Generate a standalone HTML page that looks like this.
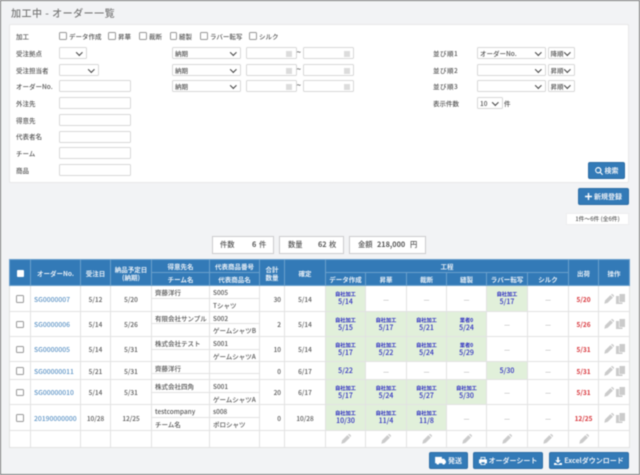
<!DOCTYPE html>
<html lang="ja"><head><meta charset="utf-8"><title>加工中 - オーダー一覧</title>
<style>
*{box-sizing:border-box}
html,body{margin:0;padding:0;width:640px;height:475px;overflow:hidden;background:#f2f3f5}
body{font-family:"Noto Sans CJK JP","Liberation Sans",sans-serif;font-size:6.5px;color:#565656;font-weight:500}
#r{position:absolute;left:0;top:0;width:640px;height:475px;border:1px solid #777;filter:blur(.42px);overflow:hidden}
#w{position:absolute;left:-1px;top:-1px;width:640px;height:475px}
.a{position:absolute;white-space:nowrap;line-height:10px;height:10px}
.i,.s{position:absolute;background:#fff;border:1px solid #d8d8d8;border-radius:1.5px;height:12px;line-height:10px;padding-left:2px}
.s:after{content:"";position:absolute;right:4px;top:1.800px;width:3.600px;height:3.600px;border:solid #444;border-width:0 1.300px 1.300px 0;transform:rotate(45deg)}
.c{position:absolute;width:7.500px;height:7.500px;background:#fff;border:1px solid #999;border-radius:1.500px}
.cal{position:absolute;right:3.500px;top:2.500px;width:6px;height:6px;background:#dcdcdc}
.b{position:absolute;background:#337ab7;border:1px solid #2e6da4;border-radius:2px;color:#e8eef5;font-weight:700;font-size:7px;display:flex;align-items:center;justify-content:center;white-space:nowrap}
.b svg{margin-right:2px;fill:#fff}
.st{position:absolute;top:236px;height:18px;background:#fff;border:1.500px solid #ccc}
.t{position:absolute;top:241px;height:9px;line-height:9px;font-size:7.300px;white-space:nowrap;color:#565656}
table{position:absolute;left:9px;top:259px;width:620px;border-collapse:collapse;table-layout:fixed;background:#fff}
th{background:#337ab7;color:#e6eef6;font-weight:700;font-size:6.500px;line-height:8px;padding:0;border:1px solid #6a9fcb;text-align:center;overflow:hidden}
td{padding:0;border:1px solid #e2e2e2;text-align:center;line-height:8px;font-size:6.500px;overflow:hidden;white-space:nowrap}
td.l{text-align:left;padding-left:3px}
td.n{color:#5f95c6;text-align:left;padding-left:3px;font-size:6.800px}
td.q{text-align:right;padding-right:3px}
td.g{background:#e1f0da;color:#2a2ac0;font-weight:500}
td.g b{display:block;font-size:5.200px;line-height:7px;font-weight:700}
td.g i{display:block;font-style:normal;font-size:7px;line-height:8px}
td.d{color:#b0b0b0}
td.r{color:#d8343a;font-weight:700}
td .ck{display:inline-block;width:7.500px;height:7.500px;border:1px solid #999;border-radius:1.500px;background:#fff;vertical-align:middle}
th .ck{display:inline-block;width:7px;height:7px;background:#fff;border-radius:1px;vertical-align:middle}
td svg{vertical-align:middle;fill:#cbcbcb}
td svg+svg{margin-left:2px}
</style></head><body>
<svg width="0" height="0" style="position:absolute"><defs>
<symbol id="p" viewBox="0 0 10 10"><path d="M.3 9.700l.8-3.300L6.400 1.100l2.500 2.500-5.300 5.300zM7 .5l.6-.4a.8.8 0 0 1 1 0l1.300 1.300a.8.8 0 0 1 0 1l-.4.6z"/></symbol>
<symbol id="k" viewBox="0 0 9 10"><path d="M0 2h3v6.500h3.500V10H0z"/><path d="M3.500 0H9v8H3.500z"/></symbol>
</defs></svg>
<div id="r"><div id="w">
<div class="a" style="left:11px;top:7px;font-size:10px;line-height:12px;height:12px;color:#777;font-weight:500;letter-spacing:.5px">加工中 - オーダー一覧</div>
<div style="position:absolute;left:9px;top:24px;width:620px;height:159px;background:#fff;border:1px solid #e8e8e8;border-radius:2px"></div>

<div class="a" style="left:16px;top:31px">加工</div>
<div class="c" style="left:59px;top:32.300px"></div><div class="a" style="left:69px;top:31px">データ作成</div>
<div class="c" style="left:108px;top:32.300px"></div><div class="a" style="left:118px;top:31px">昇華</div>
<div class="c" style="left:139px;top:32.300px"></div><div class="a" style="left:149px;top:31px">裁断</div>
<div class="c" style="left:169.500px;top:32.300px"></div><div class="a" style="left:179px;top:31px">縫製</div>
<div class="c" style="left:200px;top:32.300px"></div><div class="a" style="left:210px;top:31px">ラバー転写</div>
<div class="c" style="left:249px;top:32.300px"></div><div class="a" style="left:259px;top:31px">シルク</div>

<div class="a" style="left:16px;top:48px">受注拠点</div><div class="s" style="left:59px;top:47px;width:28px"></div>
<div class="a" style="left:16px;top:65px">受注担当者</div><div class="s" style="left:59px;top:64px;width:40px"></div>
<div class="a" style="left:16px;top:81px">オーダーNo.</div><div class="i" style="left:59px;top:80px;width:72px"></div>
<div class="a" style="left:16px;top:98px">外注先</div><div class="i" style="left:59px;top:97px;width:72px"></div>
<div class="a" style="left:16px;top:115px">得意先</div><div class="i" style="left:59px;top:114px;width:72px"></div>
<div class="a" style="left:16px;top:131px">代表者名</div><div class="i" style="left:59px;top:131px;width:72px"></div>
<div class="a" style="left:16px;top:148px">チーム</div><div class="i" style="left:59px;top:147px;width:72px"></div>
<div class="a" style="left:16px;top:165px">商品</div><div class="i" style="left:59px;top:164px;width:72px"></div>

<div class="s" style="left:172px;top:47px;width:69px">納期</div>
<div class="i" style="left:245.500px;top:47px;width:51px"><span class="cal"></span></div><div class="a" style="left:296.500px;top:48px;font-size:8px">~</div>
<div class="i" style="left:303px;top:47px;width:51px"><span class="cal"></span></div>
<div class="s" style="left:172px;top:64px;width:69px">納期</div>
<div class="i" style="left:245.500px;top:64px;width:51px"><span class="cal"></span></div><div class="a" style="left:296.500px;top:65px;font-size:8px">~</div>
<div class="i" style="left:303px;top:64px;width:51px"><span class="cal"></span></div>
<div class="s" style="left:172px;top:80px;width:69px">納期</div>
<div class="i" style="left:245.500px;top:80px;width:51px"><span class="cal"></span></div><div class="a" style="left:296.500px;top:81px;font-size:8px">~</div>
<div class="i" style="left:303px;top:80px;width:51px"><span class="cal"></span></div>

<div class="a" style="left:433px;top:48px;letter-spacing:.5px">並び順1</div><div class="s" style="left:477px;top:47px;width:69px">オーダーNo.</div><div class="s" style="left:547.500px;top:47px;width:27px">降順</div>
<div class="a" style="left:433px;top:65px;letter-spacing:.5px">並び順2</div><div class="s" style="left:477px;top:64px;width:69px"></div><div class="s" style="left:547.500px;top:64px;width:27px">昇順</div>
<div class="a" style="left:433px;top:81px;letter-spacing:.5px">並び順3</div><div class="s" style="left:477px;top:80px;width:69px"></div><div class="s" style="left:547.500px;top:80px;width:27px">昇順</div>
<div class="a" style="left:433px;top:98px">表示件数</div><div class="s" style="left:477px;top:97px;width:25.500px">10</div><div class="a" style="left:504px;top:98px">件</div>

<div class="b" style="left:588px;top:162px;width:37px;height:17px"><svg width="8" height="8" viewBox="0 0 10 10"><path d="M4 0a4 4 0 0 1 3.200 6.400L10 9.200 9 10.200 6.300 7.400A4 4 0 1 1 4 0zm0 1.500a2.500 2.500 0 1 0 0 5 2.500 2.500 0 0 0 0-5z"/></svg>検索</div>
<div class="b" style="left:578px;top:188px;width:51px;height:17px"><svg width="7" height="7" viewBox="0 0 10 10"><path d="M4 0h2v4h4v2H6v4H4V6H0V4h4z"/></svg>新規登録</div>
<div style="position:absolute;left:566px;top:213px;width:63px;height:12px;background:#fff;border:1px solid #eee;font-size:5.800px;line-height:10px;text-align:center;white-space:nowrap">1件～6件 (全6件)</div>

<div class="st" style="left:212px;width:62px"></div><div class="t" style="left:220px">件数</div><div class="t" style="left:252px;font-weight:700">6</div><div class="t" style="left:259px">件</div>
<div class="st" style="left:279px;width:65px"></div><div class="t" style="left:288px">数量</div><div class="t" style="left:318px;font-weight:700">62</div><div class="t" style="left:329px">枚</div>
<div class="st" style="left:349px;width:77px"></div><div class="t" style="left:358px">金額</div><div class="t" style="left:377px;font-weight:700">218,000</div><div class="t" style="left:410px">円</div>

<table>
<colgroup><col style="width:21px"><col style="width:50px"><col style="width:30px"><col style="width:41px"><col style="width:58px"><col style="width:50px"><col style="width:25px"><col style="width:41px"><col style="width:40px"><col style="width:41px"><col style="width:40px"><col style="width:40px"><col style="width:41px"><col style="width:41px"><col style="width:30px"><col style="width:31px"></colgroup>
<tr style="height:13px"><th rowspan="2"><span class="ck"></span></th><th rowspan="2">オーダーNo.</th><th rowspan="2">受注日</th><th rowspan="2">納品予定日<br>(納期)</th><th>得意先名</th><th>代表商品番号</th><th rowspan="2">合計<br>数量</th><th rowspan="2">確定</th><th colspan="6">工程</th><th rowspan="2">出荷</th><th rowspan="2">操作</th></tr>
<tr style="height:13px"><th>チーム名</th><th>代表商品名</th><th>データ作成</th><th>昇華</th><th>裁断</th><th>縫製</th><th>ラバー転写</th><th>シルク</th></tr>

<tr style="height:13px"><td rowspan="2"><span class="ck"></span></td><td rowspan="2" class="n">SG0000007</td><td rowspan="2">5/12</td><td rowspan="2">5/20</td><td class="l">齊藤洋行</td><td class="l">S005</td><td rowspan="2" class="q">30</td><td rowspan="2">5/14</td><td rowspan="2" class="g"><b>自社加工</b><i>5/14</i></td><td rowspan="2" class="d">—</td><td rowspan="2" class="d">—</td><td rowspan="2" class="d">—</td><td rowspan="2" class="g"><b>自社加工</b><i>5/17</i></td><td rowspan="2" class="d">—</td><td rowspan="2" class="r">5/20</td><td rowspan="2"><svg width="10" height="10"><use href="#p"/></svg><svg width="9" height="10"><use href="#k"/></svg></td></tr>
<tr style="height:13px"><td class="l"></td><td class="l">Tシャツ</td></tr>

<tr style="height:12px"><td rowspan="2"><span class="ck"></span></td><td rowspan="2" class="n">SG0000006</td><td rowspan="2">5/14</td><td rowspan="2">5/26</td><td class="l">有限会社サンプル</td><td class="l">S002</td><td rowspan="2" class="q">2</td><td rowspan="2">5/14</td><td rowspan="2" class="g"><b>自社加工</b><i>5/15</i></td><td rowspan="2" class="g"><b>自社加工</b><i>5/17</i></td><td rowspan="2" class="g"><b>自社加工</b><i>5/21</i></td><td rowspan="2" class="g"><b>業者0</b><i>5/24</i></td><td rowspan="2" class="d">—</td><td rowspan="2" class="d">—</td><td rowspan="2" class="r">5/26</td><td rowspan="2"><svg width="10" height="10"><use href="#p"/></svg><svg width="9" height="10"><use href="#k"/></svg></td></tr>
<tr style="height:13px"><td class="l"></td><td class="l">ゲームシャツB</td></tr>

<tr style="height:13px"><td rowspan="2"><span class="ck"></span></td><td rowspan="2" class="n">SG0000005</td><td rowspan="2">5/14</td><td rowspan="2">5/31</td><td class="l">株式会社テスト</td><td class="l">S001</td><td rowspan="2" class="q">10</td><td rowspan="2">5/14</td><td rowspan="2" class="g"><b>自社加工</b><i>5/17</i></td><td rowspan="2" class="g"><b>自社加工</b><i>5/22</i></td><td rowspan="2" class="g"><b>自社加工</b><i>5/24</i></td><td rowspan="2" class="g"><b>業者0</b><i>5/29</i></td><td rowspan="2" class="d">—</td><td rowspan="2" class="d">—</td><td rowspan="2" class="r">5/31</td><td rowspan="2"><svg width="10" height="10"><use href="#p"/></svg><svg width="9" height="10"><use href="#k"/></svg></td></tr>
<tr style="height:12px"><td class="l"></td><td class="l">ゲームシャツA</td></tr>

<tr style="height:12px"><td rowspan="2"><span class="ck"></span></td><td rowspan="2" class="n">SG00000011</td><td rowspan="2">5/21</td><td rowspan="2">5/31</td><td class="l">齊藤洋行</td><td class="l"></td><td rowspan="2" class="q">0</td><td rowspan="2">6/17</td><td rowspan="2" class="g"><i>5/22</i></td><td rowspan="2" class="d">—</td><td rowspan="2" class="d">—</td><td rowspan="2" class="d">—</td><td rowspan="2" class="g"><i>5/30</i></td><td rowspan="2" class="d">—</td><td rowspan="2" class="r">5/31</td><td rowspan="2"><svg width="10" height="10"><use href="#p"/></svg><svg width="9" height="10"><use href="#k"/></svg></td></tr>
<tr style="height:6px"><td class="l"></td><td class="l"></td></tr>

<tr style="height:13px"><td rowspan="2"><span class="ck"></span></td><td rowspan="2" class="n">SG00000010</td><td rowspan="2">5/14</td><td rowspan="2">5/31</td><td class="l">株式会社四角</td><td class="l">S001</td><td rowspan="2" class="q">20</td><td rowspan="2">6/17</td><td rowspan="2" class="g"><b>自社加工</b><i>5/17</i></td><td rowspan="2" class="g"><b>自社加工</b><i>5/24</i></td><td rowspan="2" class="g"><b>自社加工</b><i>5/27</i></td><td rowspan="2" class="g"><b>自社加工</b><i>5/30</i></td><td rowspan="2" class="d">—</td><td rowspan="2" class="d">—</td><td rowspan="2" class="r">5/31</td><td rowspan="2"><svg width="10" height="10"><use href="#p"/></svg><svg width="9" height="10"><use href="#k"/></svg></td></tr>
<tr style="height:12px"><td class="l"></td><td class="l">ゲームシャツA</td></tr>

<tr style="height:13px"><td rowspan="2"><span class="ck"></span></td><td rowspan="2" class="n">20190000000</td><td rowspan="2">10/28</td><td rowspan="2">12/25</td><td class="l">testcompany</td><td class="l">s008</td><td rowspan="2" class="q">0</td><td rowspan="2">10/28</td><td rowspan="2" class="g"><b>自社加工</b><i>10/30</i></td><td rowspan="2" class="g"><b>自社加工</b><i>11/4</i></td><td rowspan="2" class="g"><b>自社加工</b><i>11/8</i></td><td rowspan="2" class="d">—</td><td rowspan="2" class="d">—</td><td rowspan="2" class="d">—</td><td rowspan="2" class="r">12/25</td><td rowspan="2"><svg width="10" height="10"><use href="#p"/></svg><svg width="9" height="10"><use href="#k"/></svg></td></tr>
<tr style="height:13px"><td class="l">チーム名</td><td class="l">ポロシャツ</td></tr>

<tr style="height:17px"><td></td><td></td><td></td><td></td><td></td><td></td><td></td><td></td><td><svg width="10" height="10"><use href="#p"/></svg></td><td><svg width="10" height="10"><use href="#p"/></svg></td><td><svg width="10" height="10"><use href="#p"/></svg></td><td><svg width="10" height="10"><use href="#p"/></svg></td><td><svg width="10" height="10"><use href="#p"/></svg></td><td><svg width="10" height="10"><use href="#p"/></svg></td><td><svg width="10" height="10"><use href="#p"/></svg></td><td></td></tr>
</table>

<div class="b" style="left:429px;top:452px;width:39px;height:17px"><svg width="11" height="9" viewBox="0 0 12 10"><path d="M0 1h7.500v2H10l2 2.500V8h-1a1.500 1.500 0 0 1-3 0H4.500a1.500 1.500 0 0 1-3 0H0z"/></svg>発送</div>
<div class="b" style="left:473px;top:452px;width:70px;height:17px"><svg width="8" height="8" viewBox="0 0 10 10"><path d="M2 0h6v3h1.500l.5.500V8H8v2H2V8H0V3.500L.5 3H2zm1 1v2h4V1zM3 6.500V9h4V6.500z"/></svg>オーダーシート</div>
<div class="b" style="left:549px;top:452px;width:80px;height:17px"><svg width="8" height="8" viewBox="0 0 10 10"><path d="M4 0h2v4h2.500L5 7.500 1.500 4H4zM0 7.500h2.500L4 9h2l1.500-1.500H10V10H0z"/></svg>Excelダウンロード</div>
</div></div>
</body></html>
